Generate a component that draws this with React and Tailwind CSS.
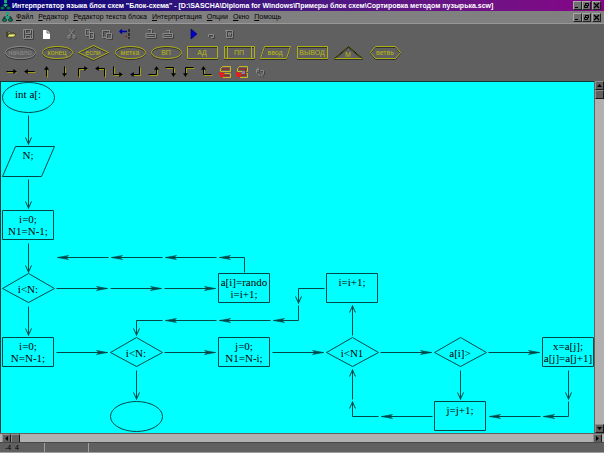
import { clsx } from 'clsx'

const menuItems = ['Файл', 'Редактор', 'Редактор текста блока', 'Интерпретация', 'Опции', 'Окно', 'Помощь']

const arrowTools = [
  { name: 'Вправо', line: 'M2 7H11', head: 'M9 5L12 7L9 9Z' },
  { name: 'Влево', line: 'M3 7H12', head: 'M5 5L2 7L5 9Z' },
  { name: 'Вверх', line: 'M7 3V12', head: 'M5 5L7 2L9 5Z' },
  { name: 'Вниз', line: 'M7 2V11', head: 'M5 9L7 12L9 9Z' },
  { name: 'Вверх и вправо', line: 'M3 12V4H11', head: 'M9 2L12 4L9 6Z' },
  { name: 'Вверх и влево', line: 'M11 12V4H3', head: 'M5 2L2 4L5 6Z' },
  { name: 'Вниз и вправо', line: 'M3 2V10H11', head: 'M9 8L12 10L9 12Z' },
  { name: 'Вниз и влево', line: 'M11 2V10H3', head: 'M5 8L2 10L5 12Z' },
  { name: 'Вправо и вверх', line: 'M2 10H10V3', head: 'M8 5L10 2L12 5Z' },
  { name: 'Вправо и вниз', line: 'M2 3H10V10', head: 'M8 9L10 12L12 9Z' },
  { name: 'Влево и вниз', line: 'M12 3H4V10', head: 'M2 9L4 12L6 9Z' },
  { name: 'Влево и вверх', line: 'M12 10H4V3', head: 'M2 5L4 2L6 5Z' },
]

const blockTools = [
  { text: 'начало', shape: 'oval', disabled: true },
  { text: 'конец', shape: 'oval' },
  { text: 'если', shape: 'diamond' },
  { text: 'метка', shape: 'oval' },
  { text: 'ВП', shape: 'oval' },
  { text: 'АД', shape: 'rect' },
  { text: 'ПП', shape: 'sub' },
  { text: 'ввод', shape: 'slant' },
  { text: 'ВЫВОД', shape: 'rect' },
  { text: 'М', shape: 'triangle' },
  { text: 'ветвь', shape: 'hex' },
]

const toolShapes = {
  oval: 'M3 9C3 1 33 1 33 9C33 17 3 17 3 9Z',
  diamond: 'M3 9L18 2L33 9L18 16Z',
  rect: 'M3 3H33V15H3Z',
  sub: 'M3 3H33V15H3ZM6 3V15M30 3V15',
  slant: 'M7 3H33L29 15H3Z',
  triangle: 'M4 15L18 3L32 15Z',
  hex: 'M3 9L8 3H28L33 9L28 15H8Z',
}

// col/row are half steps of the block grid: blocks sit on even ones
const nodes = [
  { col: 0, row: 0, shape: 'oval', lines: ['int a[:'] },
  { col: 0, row: 2, shape: 'slant', lines: ['N;'] },
  { col: 0, row: 4, shape: 'rect', lines: ['i=0;', 'N1=N-1;'] },
  { col: 0, row: 6, shape: 'diamond', lines: ['i<N:'] },
  { col: 4, row: 6, shape: 'rect', lines: ['a[i]=rando', 'i=i+1;'] },
  { col: 6, row: 6, shape: 'rect', lines: ['i=i+1;'] },
  { col: 0, row: 8, shape: 'rect', lines: ['i=0;', 'N=N-1;'] },
  { col: 2, row: 8, shape: 'diamond', lines: ['i<N:'] },
  { col: 4, row: 8, shape: 'rect', lines: ['j=0;', 'N1=N-i;'] },
  { col: 6, row: 8, shape: 'diamond', lines: ['i<N1'] },
  { col: 8, row: 8, shape: 'diamond', lines: ['a[i]>'] },
  { col: 10, row: 8, shape: 'rect', lines: ['x=a[j];', 'a[j]=a[j+1]'] },
  { col: 2, row: 10, shape: 'oval', lines: [] },
  { col: 8, row: 10, shape: 'rect', lines: ['j=j+1;'] },
]

const nodeShapes = {
  rect: 'M-26 -15H25V14H-26Z',
  slant: 'M-13 -15H26L13 15H-26Z',
  diamond: 'M-26 0L0 -15L26 0L0 14Z',
}

const links = [
  ['down', 0, 1], ['down', 0, 3], ['down', 0, 5], ['down', 0, 7],
  ['left', 1, 5], ['left', 2, 5], ['left', 3, 5], ['upLeft', 4, 5],
  ['right', 1, 6], ['right', 2, 6], ['right', 3, 6], ['leftDown', 5, 6],
  ['leftDown', 2, 7], ['left', 3, 7], ['left', 4, 7], ['downLeft', 5, 7], ['up', 6, 7],
  ['right', 1, 8], ['right', 3, 8], ['right', 5, 8], ['right', 7, 8], ['right', 9, 8],
  ['down', 2, 9], ['up', 6, 9], ['down', 8, 9], ['down', 10, 9],
  ['leftUp', 6, 10], ['left', 7, 10], ['left', 9, 10], ['downLeft', 10, 10],
]

const headLeft = 'M-14 -2L-25 0L-14 2L-17 0Z'
const headRight = 'M14 -2L25 0L14 2L17 0Z'
const headDown = 'M-3 8L0 15L3 8L0 14Z'
const headUp = 'M-3 -8L0 -15L3 -8L0 -14Z'

const linkShapes = {
  down: ['M0 -14V15', headDown],
  up: ['M0 15V-15', headUp],
  left: ['M26 0H-25', headLeft],
  right: ['M-26 0H25', headRight],
  upLeft: ['M0 15V0H-25', headLeft],
  downLeft: ['M0 -15V0H-25', headLeft],
  leftDown: ['M26 0H0V15', headDown],
  leftUp: ['M26 0H0V-15', headUp],
}

const place = (col, row) => ({ x: 27 + col * 54, y: Math.round(15 + row * 31.9) })

const ToolButton = ({ label, children, disabled }) => (
  <button type="button" aria-label={label} disabled={disabled} className="flex h-[19px] min-w-0 items-center justify-center">
    {children}
  </button>
)

const Icon = ({ children }) => (
  <svg width="16" height="16" viewBox="0 0 16 16" fill="none" className="shrink-0">
    {children}
  </svg>
)

// Greyed-out glyph with a dark edge under it
const Faded = ({ d }) => (
  <Icon>
    <path d={d} stroke="#404040" transform="translate(1 1)" />
    <path d={d} stroke="#8a8a8a" />
  </Icon>
)

const WindowButtons = () => (
  <div className="flex shrink-0">
    {['Свернуть', 'Восстановить', 'Закрыть'].map((label, i) => (
      <button
        key={label}
        type="button"
        aria-label={label}
        className={clsx('h-[9px] w-[9px] border border-t-[#a8a8a8] border-l-[#a8a8a8] border-r-[#202020] border-b-[#202020] bg-[#707070]', i === 2 && 'ml-px')}
      >
        <svg width="7" height="7" viewBox="0 0 7 7" fill="none" stroke="#000">
          {i === 0 && <path d="M1 5.5H4" />}
          {i === 1 && <path d="M2.5 3V1.5H5.5V4M1.5 3.5H4.5V5.5H1.5Z" />}
          {i === 2 && <path d="M1 1L6 6M6 1L1 6" strokeWidth="1.3" />}
        </svg>
      </button>
    ))}
  </div>
)

const Logo = ({ size }) => (
  <svg width={size} height={size} viewBox="0 0 11 11" className="shrink-0">
    <path d="M5.5 2V5M2 7V5H9V7" stroke="#001818" fill="none" />
    <rect x="4" y="0" width="3" height="3" fill="#18a870" />
    <path d="M3 5L5.5 3.5L8 5L5.5 7Z" fill="#20b090" />
    <ellipse cx="2.5" cy="8" rx="2.2" ry="1.5" fill="#087858" stroke="#002820" strokeWidth=".6" />
    <ellipse cx="8.5" cy="8" rx="2.2" ry="1.5" fill="#087858" stroke="#002820" strokeWidth=".6" />
  </svg>
)

const FileToolbar = () => (
  <div className="flex gap-2 pl-0.5">
    <div className="grid w-[53px] grid-cols-3">
      <ToolButton label="Открыть">
        <Icon>
          <path d="M4 6V11H11L13 8H6L4 11V6H7L8 7H11V8" fill="#f0f080" stroke="#303010" strokeWidth=".7" />
        </Icon>
      </ToolButton>
      <ToolButton label="Сохранить" disabled><Faded d="M3.5 3.5H12.5V12.5H3.5ZM5.5 3.5V7.5H10.5V3.5M5.5 12.5V9.5H10.5V12.5" /></ToolButton>
      <ToolButton label="Новый">
        <Icon><path d="M5 4H9L12 7V13H5Z" fill="#fff" /><path d="M9 4V7H12" stroke="#404040" strokeWidth=".8" /></Icon>
      </ToolButton>
    </div>
    <div className="grid w-[71px] grid-cols-4">
      <ToolButton label="Вырезать" disabled><Faded d="M5.5 3.5L9.5 9.5M9.5 3.5L5.5 9.5M4 9.5H6V12H4ZM9 9.5H11V12H9Z" /></ToolButton>
      <ToolButton label="Копировать" disabled><Faded d="M3.5 3.5H7.5V9.5H3.5ZM7.5 6.5H11.5V12.5H7.5ZM5 6H7M9 9H11" /></ToolButton>
      <ToolButton label="Вставить" disabled><Faded d="M3.5 4.5H10.5V7M3.5 4.5V11.5H7M7.5 7.5H12.5V12.5H7.5Z" /></ToolButton>
      <ToolButton label="Отменить">
        <Icon>
          <path d="M3 5.5H10M5 3.5L3 5.5L5 7.5" stroke="#0000a8" strokeWidth="1.5" />
          <path d="M12 3V13" stroke="#202020" strokeWidth="1.5" strokeDasharray="3 1" />
          <path d="M8 10.5H10" stroke="#a02020" />
        </Icon>
      </ToolButton>
    </div>
    <div className="grid w-[35px] grid-cols-2">
      <ToolButton label="Печать" disabled><Faded d="M4.5 3.5H8.5V7.5M3 7.5H12.5V11.5H3ZM4.5 9.5H11" /></ToolButton>
      <ToolButton label="Просмотр" disabled><Faded d="M6.5 4.5H9.5V7.5M3 7.5H12.5V11.5H3ZM4.5 9.5H11" /></ToolButton>
    </div>
    <div className="grid w-[53px] grid-cols-3">
      <ToolButton label="Запуск"><Icon><path d="M5 3V13L11 8Z" fill="#0000c8" stroke="#000060" strokeWidth=".6" /></Icon></ToolButton>
      <ToolButton label="Шаг" disabled><Faded d="M5.5 11V8.5H10.5V11.5H8" /></ToolButton>
      <ToolButton label="Стоп" disabled><Faded d="M4 4.5H11.5V11.5H5.5V4.5M7.5 7H9.5V9H7.5Z" /></ToolButton>
    </div>
  </div>
)

const BlockToolbar = () => (
  <div className="grid w-[403px] grid-cols-11 pl-0.5">
    {blockTools.map(({ text, shape, disabled }) => (
      <ToolButton key={text} label={text} disabled={disabled}>
        <svg width="36" height="19" viewBox="0 0 36 19" fill="none" className="shrink-0">
          <path d={toolShapes[shape]} stroke="#303030" transform="translate(.5 1.5)" />
          <path d={toolShapes[shape]} stroke={disabled ? '#8c8c8c' : '#b0b010'} transform="translate(.5 .5)" />
          {shape === 'triangle' && <path d="M4 15L18 3L32 15" stroke="#181800" transform="translate(.5 .5)" />}
          <text
            x="18"
            y={shape === 'triangle' ? 14 : 12}
            textAnchor="middle"
            className={clsx("font-['Liberation_Sans'] text-[7px]", disabled ? 'fill-[#8c8c8c]' : 'fill-[#b8b810]')}
          >
            {text}
          </text>
        </svg>
      </ToolButton>
    ))}
  </div>
)

const ArrowToolbar = () => (
  <div className="grid w-[269px] grid-cols-15 pl-[3px]">
    {arrowTools.map(({ name, line, head }) => (
      <ToolButton key={name} label={name}>
        <Icon>
          <path d={line} stroke="#a0a010" transform="translate(1.5 1.5)" />
          <path d={line} stroke="#000" transform="translate(.5 .5)" />
          <path d={head} fill="#000" stroke="#000" strokeWidth=".5" transform="translate(.5 .5)" />
        </Icon>
      </ToolButton>
    ))}
    {['Удалить блок', 'Удалить связь'].map((name, i) => (
      <ToolButton key={name} label={name}>
        <Icon>
          <path d="M3.5 4.5L5.5 2.5H13.5V7.5H3.5ZM5.5 9.5H13.5V13.5H6" stroke="#c8b820" />
          <path d={i ? 'M5 5H11.5V11H7' : 'M5 5H12M7 11.5H12'} stroke="#902828" strokeWidth="1.5" />
          <path d="M2 8L8 9L6 11L8 13H3Z" fill="#f01818" />
          {i === 1 && <path d="M8 7H11V10H8Z" fill="#8080b0" />}
        </Icon>
      </ToolButton>
    ))}
    <ToolButton label="Обновить" disabled><Faded d="M4.5 9V5.5H7.5M6 3.5V8M8.5 6.5H11.5V10M5.5 9.5L8 12M10 9.5V12.5" /></ToolButton>
  </div>
)

const Diagram = () => (
  <main className="relative min-w-0 flex-1 overflow-hidden border-t border-l border-[#103838] bg-[#00ffff]">
    <svg className="absolute inset-0 h-full w-full" fill="none" stroke="#004848">
      {links.map(([kind, col, row]) => {
        const { x, y } = place(col, row)
        const [line, head] = linkShapes[kind]
        return (
          <g key={`${col}-${row}`} transform={`translate(${x + 0.5} ${y + 0.5})`}>
            <path d={line} />
            <path d={head} fill="#004848" strokeWidth=".6" />
          </g>
        )
      })}
      {nodes.map(({ col, row, shape }) => {
        const { x, y } = place(col, row)
        return (
          <g key={`${col}-${row}`} transform={`translate(${x + 0.5} ${y + 0.5})`}>
            {shape === 'oval' ? <ellipse rx="26" ry="15" /> : <path d={nodeShapes[shape]} />}
          </g>
        )
      })}
    </svg>
    {nodes.map(({ col, row, shape, lines }) => {
      const { x, y } = place(col, row)
      return (
        <div
          key={`${col}-${row}`}
          className="absolute flex h-6 w-[52px] flex-col items-center font-['Liberation_Serif',serif] text-[11px] leading-3 whitespace-nowrap text-black"
          style={{ left: x - 26, top: y - (shape === 'diamond' ? 5 : shape === 'oval' ? 9 : 12) }}
        >
          {lines.map((line) => (
            <span key={line}>{line}</span>
          ))}
        </div>
      )
    })}
  </main>
)

const ScrollButton = ({ label, d }) => (
  <button type="button" aria-label={label} className="h-[9px] w-[9px] shrink-0 border border-t-[#909090] border-l-[#909090] border-r-[#181818] border-b-[#181818] bg-[#606060]">
    {d && <svg width="7" height="7" viewBox="0 0 7 7"><path d={d} fill="#000" /></svg>}
  </button>
)

const App = () => (
  <div className="flex h-screen flex-col overflow-hidden bg-[#606060] font-['Liberation_Sans',sans-serif] text-black">
    <header>
      <div className="flex h-[11px] items-center justify-between bg-linear-to-r from-[#000078] to-[#880088] pr-[3px]">
        <h1 className="flex min-w-0 items-center gap-px text-[7px] leading-[11px] font-bold whitespace-nowrap text-white">
          <Logo size={11} />
          Интерпретатор языка блок схем "Блок-схема" - [D:\SASCHA\Diploma for Windows\Примеры блок схем\Сортировка методом пузырька.scw]
        </h1>
        <WindowButtons />
      </div>
      <div className="flex h-3 items-center justify-between bg-[#808080] pr-[3px]">
        <nav className="flex items-center gap-[5px] text-[7px] leading-3 whitespace-nowrap">
          <span className="-mr-0.5 pl-0.5"><Logo size={11} /></span>
          {menuItems.map((item) => (
            <button key={item} type="button">
              <span className="underline">{item[0]}</span>{item.slice(1)}
            </button>
          ))}
        </nav>
        <WindowButtons />
      </div>
      <div className="border-t border-[#989898]">
        <FileToolbar />
        <BlockToolbar />
        <ArrowToolbar />
      </div>
    </header>

    <div className="flex min-h-0 flex-1">
      <Diagram />
      <div className="flex w-[10px] flex-col border-l border-[#606060] bg-[#b0b0b0]">
        <ScrollButton label="Прокрутить вверх" d="M1 5L3.5 2L6 5Z" />
        <ScrollButton label="Ползунок по вертикали" />
        <div className="flex-1" />
        <ScrollButton label="Прокрутить вниз" d="M1 2L3.5 5L6 2Z" />
      </div>
    </div>
    <div className="flex h-[9px] border-t border-[#606060] bg-[#b0b0b0] px-0.5">
      <ScrollButton label="Прокрутить влево" d="M5 1L2 3.5L5 6Z" />
      <ScrollButton label="Ползунок по горизонтали" />
      <div className="flex-1" />
      <ScrollButton label="Прокрутить вправо" d="M2 1L5 3.5L2 6Z" />
    </div>
    <footer className="flex h-[11px] shrink-0 border-t border-b border-t-[#484848] border-b-[#a0a0a0] text-[7px] leading-[9px]">
      <div className="w-[45px] border-r border-[#a0a0a0] pl-[5px] whitespace-pre">-4  4</div>
      <div className="w-11 border-r border-[#a0a0a0]" />
    </footer>
  </div>
)

export default App
